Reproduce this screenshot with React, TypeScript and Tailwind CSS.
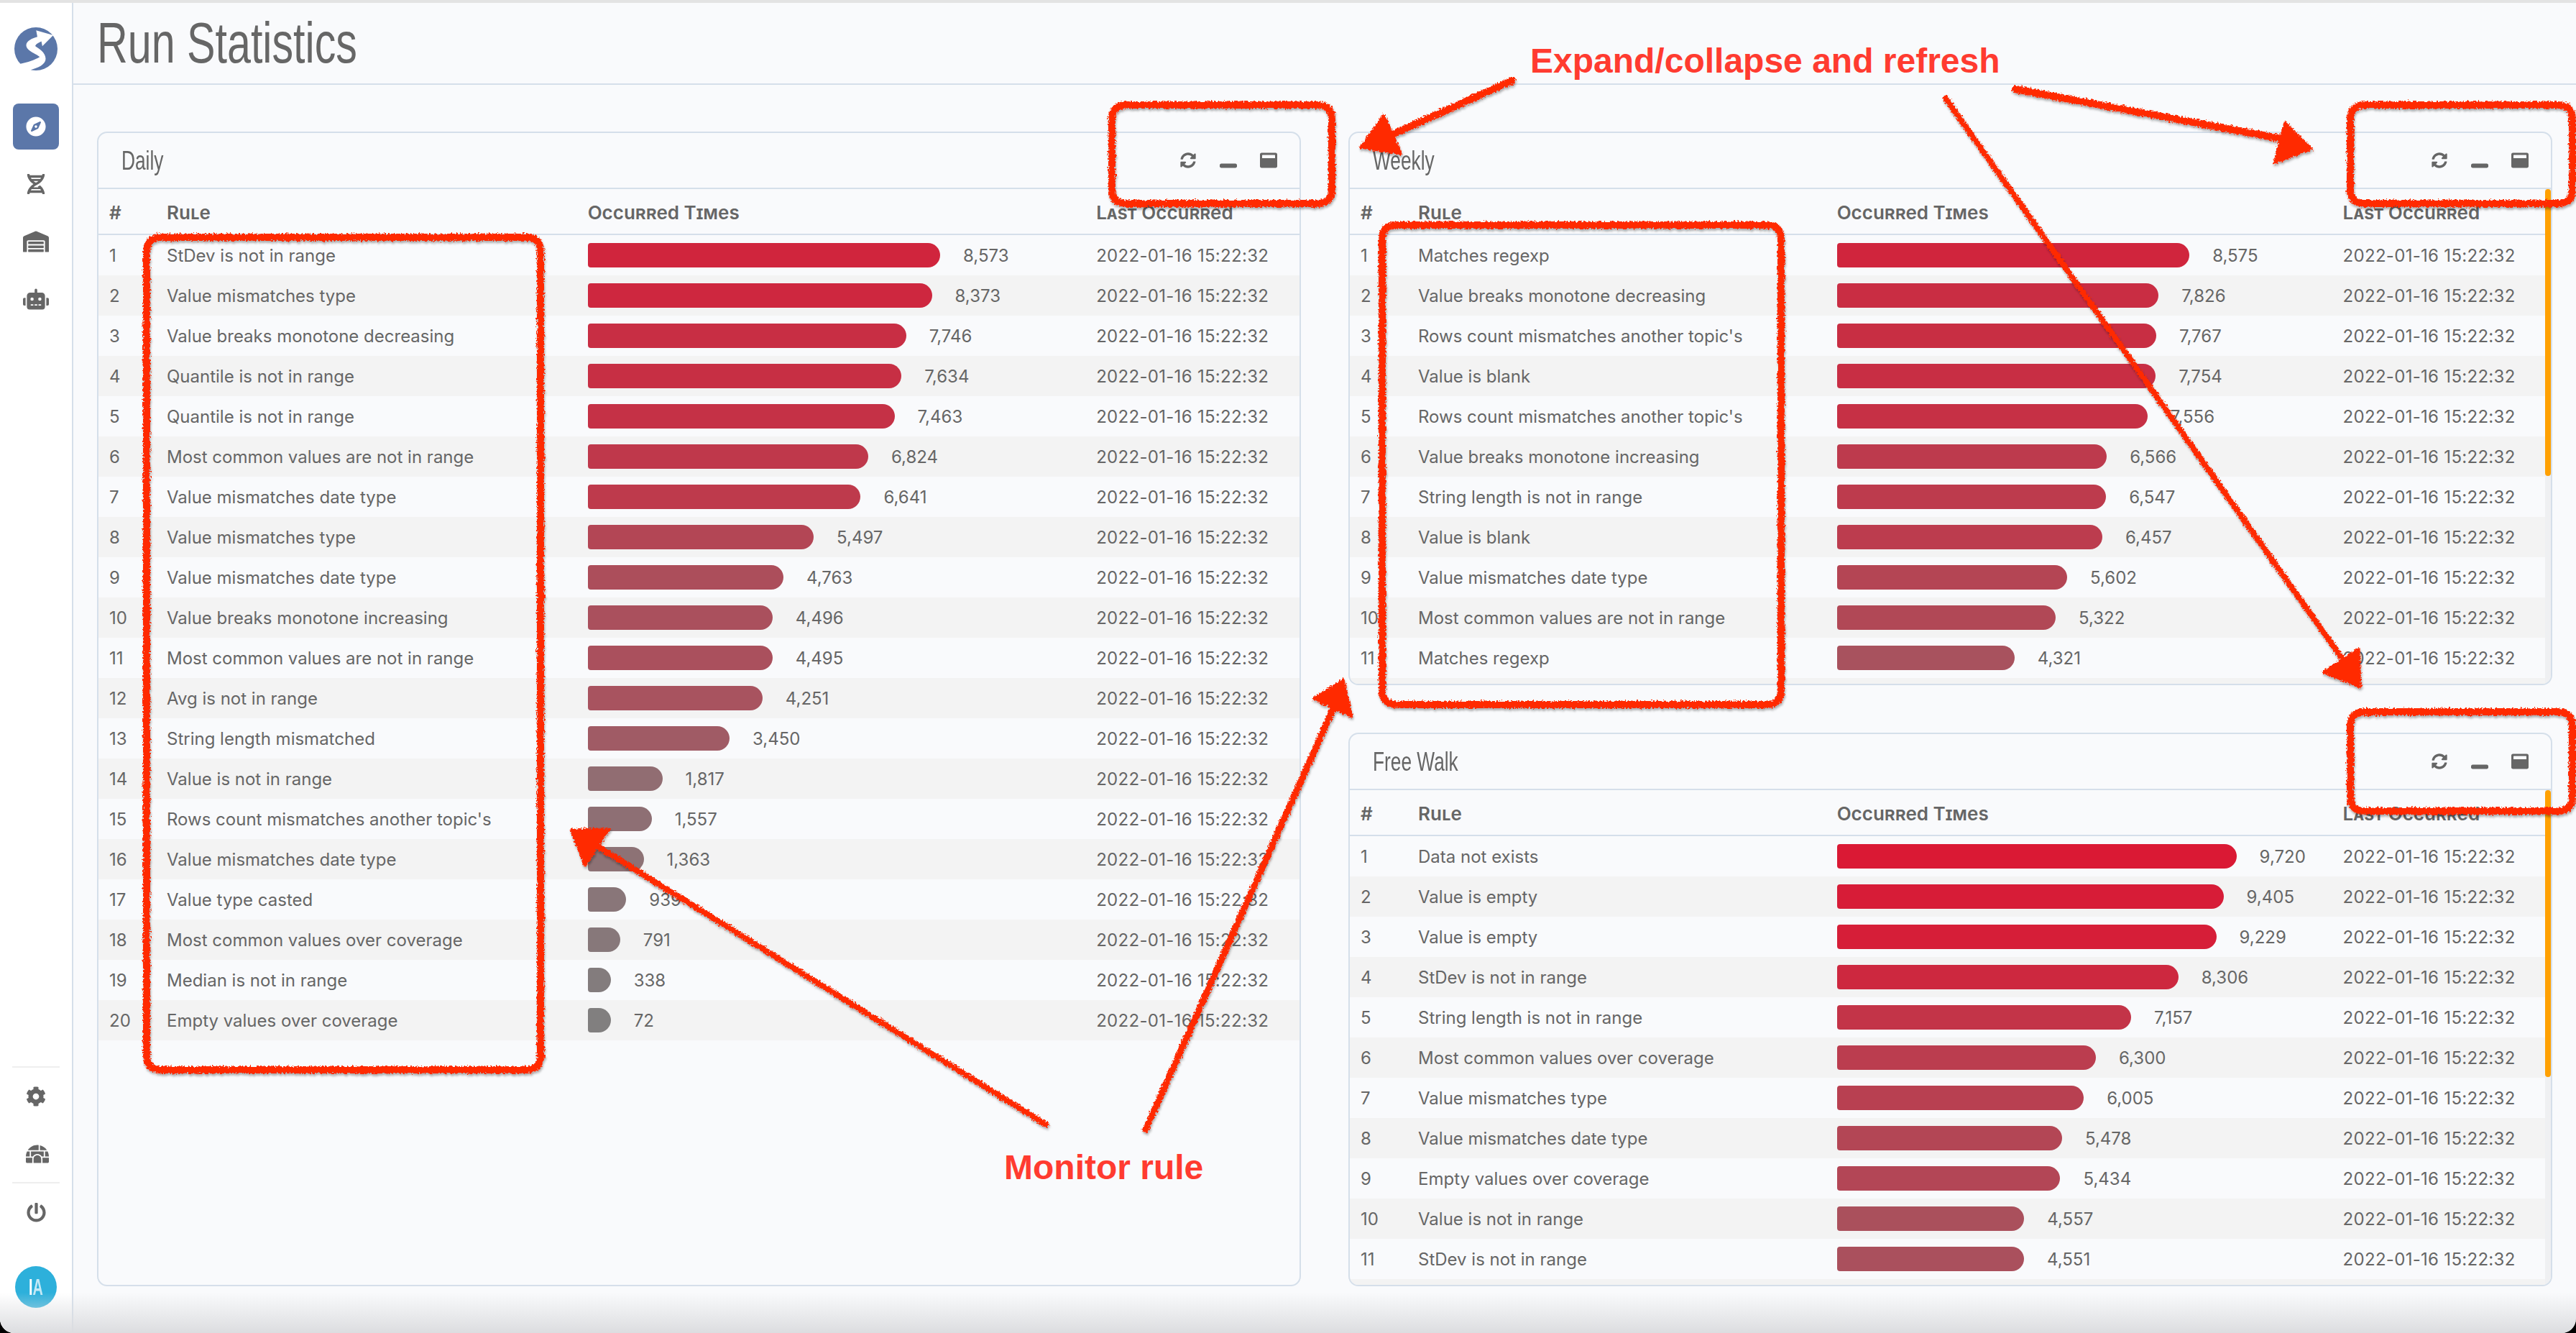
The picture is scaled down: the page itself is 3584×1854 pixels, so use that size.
import { FaCog, FaCompass, FaDna, FaIgloo, FaPowerOff, FaRobot, FaSyncAlt, FaWarehouse, FaWindowMaximize, FaWindowMinimize } from 'react-icons/fa';

type Row = [string, number];

const daily: Row[] = [
    ['StDev is not in range', 8573],
    ['Value mismatches type', 8373],
    ['Value breaks monotone decreasing', 7746],
    ['Quantile is not in range', 7634],
    ['Quantile is not in range', 7463],
    ['Most common values are not in range', 6824],
    ['Value mismatches date type', 6641],
    ['Value mismatches type', 5497],
    ['Value mismatches date type', 4763],
    ['Value breaks monotone increasing', 4496],
    ['Most common values are not in range', 4495],
    ['Avg is not in range', 4251],
    ['String length mismatched', 3450],
    ['Value is not in range', 1817],
    ["Rows count mismatches another topic's", 1557],
    ['Value mismatches date type', 1363],
    ['Value type casted', 939],
    ['Most common values over coverage', 791],
    ['Median is not in range', 338],
    ['Empty values over coverage', 72],
];

const weekly: Row[] = [
    ['Matches regexp', 8575],
    ['Value breaks monotone decreasing', 7826],
    ["Rows count mismatches another topic's", 7767],
    ['Value is blank', 7754],
    ["Rows count mismatches another topic's", 7556],
    ['Value breaks monotone increasing', 6566],
    ['String length is not in range', 6547],
    ['Value is blank', 6457],
    ['Value mismatches date type', 5602],
    ['Most common values are not in range', 5322],
    ['Matches regexp', 4321],
];

const freeWalk: Row[] = [
    ['Data not exists', 9720],
    ['Value is empty', 9405],
    ['Value is empty', 9229],
    ['StDev is not in range', 8306],
    ['String length is not in range', 7157],
    ['Most common values over coverage', 6300],
    ['Value mismatches type', 6005],
    ['Value mismatches date type', 5478],
    ['Empty values over coverage', 5434],
    ['Value is not in range', 4557],
    ['StDev is not in range', 4551],
];

const columns = 'grid grid-cols-[95px_586fr_708fr_283fr] items-center';

// gray at zero, crimson at the top of the scale
const barColor = (value: number): string => {
    const t = value / 10000;
    const mix = (from: number, to: number) => Math.round(from + (to - from) * t);
    return `rgb(${mix(128, 221)}, ${mix(128, 22)}, ${mix(128, 50)})`;
};

function Logo() {
    return (
        <svg viewBox="58 115 182 182" className="w-[60px] h-[60px] mt-[34px]">
            <circle cx="149" cy="206" r="91" fill="#5b77a9" />
            <path
                fill="#fff"
                d="M80 270 C115 262 145 252 165 240 C150 225 108 215 108 190 C108 172 135 160 155 155 L150 128 L222 148 L176 195 L172 174 C160 180 148 186 146 194 C160 205 190 220 190 248 C190 272 160 286 122 296 L70 300 Z"
            />
        </svg>
    );
}

function Sidebar() {
    return (
        <aside className="w-[102px] shrink-0 border-r-2 border-[#d5dfea] bg-white flex flex-col items-center text-[#666666] pb-[35px]">
            <Logo />
            <div className="mt-[46px] w-16 h-16 rounded-lg bg-[#5b77a9] flex items-center justify-center text-white">
                <FaCompass size={28} />
            </div>
            <div className="mt-4 w-16 h-16 flex items-center justify-center"><FaDna size={28} /></div>
            <div className="mt-4 w-16 h-16 flex items-center justify-center"><FaWarehouse size={36} /></div>
            <div className="mt-4 w-16 h-16 flex items-center justify-center"><FaRobot size={36} /></div>

            <div className="mt-auto w-[66px] h-[2px] bg-[#eeeeee]" />
            <div className="mt-2 w-16 h-16 flex items-center justify-center"><FaCog size={28} /></div>
            <div className="mt-4 w-16 h-16 flex items-center justify-center pl-1"><FaIgloo size={32} /></div>
            <div className="mt-[7px] w-[66px] h-[2px] bg-[#eeeeee]" />
            <div className="mt-2 w-16 h-16 flex items-center justify-center"><FaPowerOff size={27} /></div>
            <div className="mt-[43px] w-[58px] h-[58px] rounded-full bg-[#2db0db] flex items-center justify-center text-[32px] font-bold font-['Liberation_Sans',sans-serif]">
                <div className="scale-x-[0.62]">
                    <span className="text-white">I</span>
                    <span className="text-[#c4e9f6]">A</span>
                </div>
            </div>
        </aside>
    );
}

function StatCard({ title, rows, thumb, className = '' }: { title: string; rows: Row[]; thumb?: number; className?: string }) {
    return (
        <section className={`border-2 border-[#d5dfea] rounded-[14px] overflow-hidden flex flex-col ${className}`}>
            <div className="h-[78px] shrink-0 border-b-2 border-[#d5dfea] flex items-center pl-8 pr-[31px] text-[#666666]">
                <h2 className="text-[36px] pt-[2px] origin-left scale-x-[0.73] font-['Liberation_Sans',sans-serif]">{title}</h2>
                <div className="ml-auto flex items-center">
                    <FaSyncAlt size={22} />
                    <FaWindowMinimize size={24} className="ml-[33px]" />
                    <FaWindowMaximize size={24} className="ml-[32px]" />
                </div>
            </div>
            <div className="flex-1 min-h-0 flex">
                <div className="flex-1 min-w-0 flex flex-col">
                    <div className={`${columns} h-[64px] shrink-0 pt-[2px] border-b-2 border-[#d5dfea] font-semibold text-[26px] [font-variant:small-caps]`}>
                        <div className="pl-[15px]">#</div>
                        <div>Rule</div>
                        <div>Occurred Times</div>
                        <div>Last Occurred</div>
                    </div>
                    {rows.map(([rule, value], index) => (
                        <div key={index} className={`${columns} h-[56px] shrink-0 ${index % 2 === 1 ? 'bg-[#f3f3f3]' : ''}`}>
                            <div className="pl-[15px] pt-[2px]">{index + 1}</div>
                            <div className="pt-[2px]">{rule}</div>
                            <div className="flex items-center">
                                <div
                                    className="h-[34px] rounded-l-[4px] rounded-r-[17px]"
                                    style={{ width: Math.max(32, value * 0.0572), backgroundColor: barColor(value) }}
                                />
                                <span className="ml-8 pt-[2px]">{value.toLocaleString('en-US')}</span>
                            </div>
                            <div className="pt-[2px] tracking-[0.3px]">2022-01-16 15:22:32</div>
                        </div>
                    ))}
                    {thumb && <div className="flex-1 bg-[#f3f3f3]" />}
                </div>
                {thumb && (
                    <div className="w-2 shrink-0 bg-[#eff0f2]">
                        <div className="w-2 bg-[#ffa000] rounded-full" style={{ height: thumb }} />
                    </div>
                )}
            </div>
        </section>
    );
}

const box = (x1: number, y1: number, x2: number, y2: number, r: number, gapTop?: number, gapBottom?: number) => {
    const startY = gapBottom ?? y1 + r;
    const endY = gapTop ?? startY;
    return `M${x2} ${startY} L${x2} ${y2 - r} Q${x2} ${y2} ${x2 - r} ${y2} L${x1 + r} ${y2} Q${x1} ${y2} ${x1} ${y2 - r} L${x1} ${y1 + r} Q${x1} ${y1} ${x1 + r} ${y1} L${x2 - r} ${y1} Q${x2} ${y1} ${x2} ${y1 + r} L${x2} ${endY}`;
};

function Annotations() {
    const red = '#ff2a00';
    return (
        <>
            <svg viewBox="0 0 3584 1854" className="absolute inset-0 w-[3584px] h-[1854px] pointer-events-none">
                <defs>
                    <filter id="pencil" filterUnits="userSpaceOnUse" x="0" y="0" width="3584" height="1854">
                        <feTurbulence type="fractalNoise" baseFrequency="0.4" numOctaves="2" seed="4" />
                        <feDisplacementMap in="SourceGraphic" scale="7" xChannelSelector="R" yChannelSelector="G" />
                        <feDropShadow dx="1" dy="3" stdDeviation="1.5" floodColor="#000" floodOpacity="0.3" />
                    </filter>
                </defs>
                <g filter="url(#pencil)" fill="none" stroke={red} strokeLinecap="round" strokeLinejoin="round">
                    <g strokeWidth="10">
                        <path d={box(1547, 146, 1853, 283, 20, 210, 216)} />
                        <path d={box(3270, 146, 3579, 283, 20, 210, 216)} />
                        <path d={box(3270, 990, 3579, 1128, 20, 1058, 1064)} />
                        <path d={box(204, 330, 752, 1488, 20)} />
                        <path d={box(1923, 313, 2478, 980, 20)} />
                        <path d="M2104 112 L1935 188" />
                        <path d="M2804 124 L3185 195" />
                        <path d="M2707 137 L3265 925" strokeWidth="8" />
                        <path d="M1455 1564 L820 1170" strokeWidth="8" />
                        <path d="M1594 1571 L1855 985" strokeWidth="9" />
                    </g>
                    <g fill={red} strokeWidth="3">
                        <path d="M1893 205 L1925 160 L1950 214 Z" />
                        <path d="M3216 207 L3179 170 L3164 227 Z" />
                        <path d="M3284 956 L3282 902 L3232 935 Z" />
                        <path d="M794 1154 L848 1153 L814 1204 Z" />
                        <path d="M1869 945 L1827 972 L1881 997 Z" />
                    </g>
                </g>
            </svg>
            <div className="absolute left-[2129px] top-[56px] text-[48px] leading-[58px] font-bold text-[#ff3b30] whitespace-nowrap pointer-events-none font-['Liberation_Sans',sans-serif]">
                Expand/collapse and refresh
            </div>
            <div className="absolute left-[1397px] top-[1595px] text-[48px] leading-[58px] font-bold text-[#ff3b30] whitespace-nowrap pointer-events-none font-['Liberation_Sans',sans-serif]">
                Monitor rule
            </div>
        </>
    );
}

export default function App() {
    return (
        <div className="w-[3584px] h-[1854px] bg-black overflow-hidden">
            <div className="relative w-full h-full rounded-b-[20px] overflow-hidden bg-[#f9fafc] flex flex-col text-[24px] text-[#666666] font-['Inter',sans-serif]">
                <div className="h-1 shrink-0 bg-[#e3e3e3]" />
                <div className="flex-1 min-h-0 flex">
                    <Sidebar />
                    <main className="flex-1 min-w-0 flex flex-col">
                        <header className="h-[114px] shrink-0 border-b-2 border-[#d5dfea] pl-[33px] flex items-center">
                            <h1 className="text-[80px] leading-none origin-left scale-x-[0.74] font-['Liberation_Sans',sans-serif]">Run Statistics</h1>
                        </header>
                        <div className="pt-[65px] px-[33px] grid grid-cols-2 grid-rows-[770px_770px] gap-[66px]">
                            <StatCard title="Daily" rows={daily} className="row-span-2" />
                            <StatCard title="Weekly" rows={weekly} thumb={399} />
                            <StatCard title="Free Walk" rows={freeWalk} thumb={399} />
                        </div>
                    </main>
                </div>
                <div className="absolute left-0 right-0 bottom-0 h-[56px] bg-gradient-to-b from-transparent to-[#dcdde0] pointer-events-none" />
                <Annotations />
            </div>
        </div>
    );
}
